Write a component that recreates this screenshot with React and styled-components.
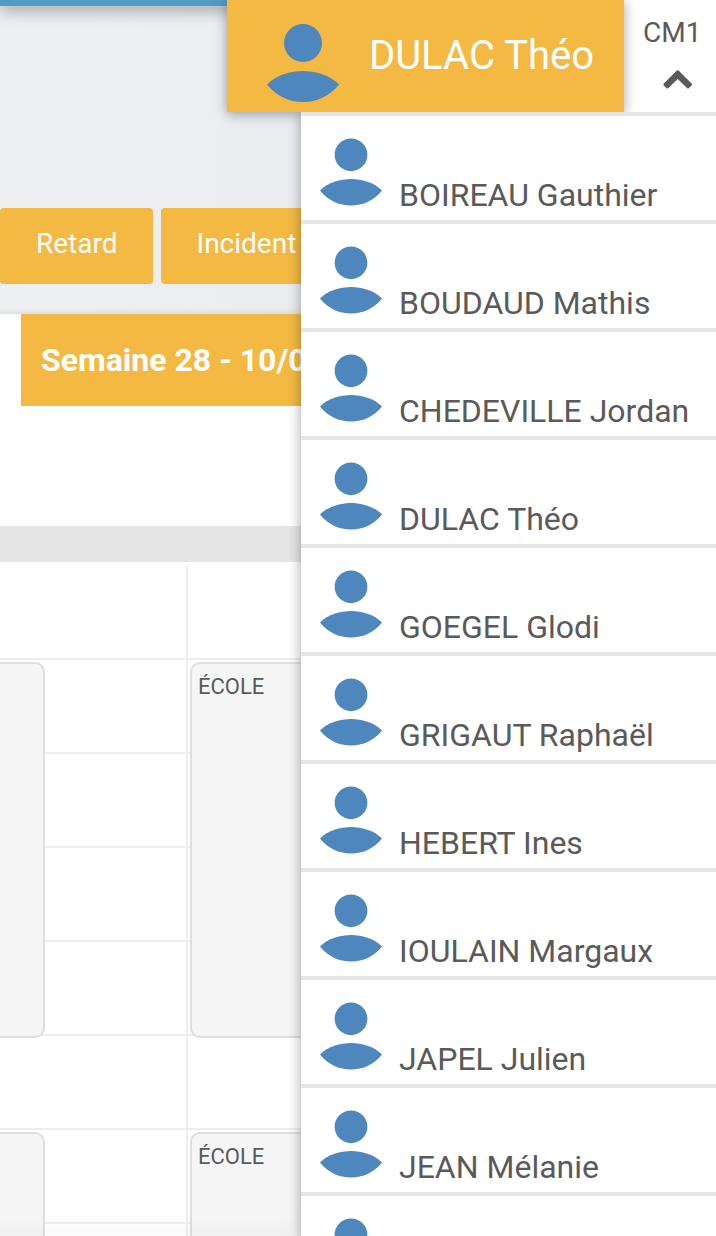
import React, { useState } from 'react';
import styled, { createGlobalStyle, ThemeProvider } from 'styled-components';

const theme = {
  colors: {
    accent: '#f4b942',
    blue: '#4e87bd',
    bar: '#529bc6',
    text: '#5a5a5a',
    divider: '#e5e5e5',
    line: '#ededed',
  },
};

const GlobalStyle = createGlobalStyle`
  * {
    box-sizing: border-box;
  }

  body {
    margin: 0;
    background: white;
    color: ${props => props.theme.colors.text};
    font-family: Roboto, 'Liberation Sans', sans-serif;
  }

  button {
    font-family: inherit;
    border: none;
    cursor: pointer;
  }
`;

const Page = styled.div`
  position: relative;
  height: 100vh;
  overflow: hidden;

  &::after {
    content: '';
    position: absolute;
    inset: auto 0 0 0;
    height: 24px;
    background: linear-gradient(rgba(0, 0, 0, 0), rgba(0, 0, 0, 0.02));
    pointer-events: none;
  }
`;

const TopBar = styled.div`
  height: 6px;
  background: ${props => props.theme.colors.bar};
  box-shadow: 0 2px 16px rgba(0, 0, 0, 0.65);
`;

const Header = styled.header`
  background: linear-gradient(to right, #eeeff1, #ebecf1 60%);
  box-shadow: inset 0 -8px 8px -8px rgba(0, 0, 0, 0.12);
`;

const Actions = styled.div`
  display: flex;
  gap: 8px;
  padding: 202px 0 30px;
`;

const ActionButton = styled.button`
  height: 76px;
  padding: 0 35px 4px 36px;
  border-radius: 4px;
  background: ${props => props.theme.colors.accent};
  color: white;
  font-size: 28px;
  line-height: 32px;
`;

const WeekBanner = styled.h2`
  margin: 0 0 120px 21px;
  padding: 26px 20px;
  background: ${props => props.theme.colors.accent};
  color: white;
  font-size: 32px;
  font-weight: 700;
  line-height: 40px;
  white-space: nowrap;
`;

const DayBand = styled.div`
  height: 36px;
  margin-bottom: 4px;
  background: ${props => props.theme.colors.divider};
`;

const Timetable = styled.div`
  display: grid;
  grid-template-columns: 188px 1fr;
  grid-auto-rows: 94px;
`;

const Slot = styled.div`
  grid-column: ${props => props.$day};
  grid-row: ${props => props.$hour};
  border-bottom: 2px solid ${props => props.theme.colors.line};
  border-right: 2px solid ${props => props.theme.colors.line};
`;

const Event = styled.div`
  grid-column: ${props => props.$day};
  grid-row: ${props => props.$start} / span 4;
  margin: ${props => (props.$day === 1 ? '2px 143px -2px -12px' : '2px 2px -2px')};
  padding: 10px 6px;
  border: 2px solid #dedede;
  border-radius: 10px;
  background: #f5f5f5;
  font-size: 22px;
  line-height: 26px;
`;

const Picker = styled.div`
  position: absolute;
  inset: 0 0 0 auto;
  display: flex;
  flex-direction: column;
  align-items: flex-end;
`;

const PickerHead = styled.div`
  position: relative;
  display: flex;
`;

const Current = styled.div`
  position: relative;
  z-index: 1;
  display: flex;
  align-items: center;
  gap: 30px;
  height: 112px;
  padding: 14px 30px 0 40px;
  background: ${props => props.theme.colors.accent};
  box-shadow: 0 2px 12px rgba(0, 0, 0, 0.36);
`;

const CurrentName = styled.span`
  padding-bottom: 14px;
  color: white;
  font-size: 40px;
  line-height: 48px;
  white-space: nowrap;
`;

const Toggle = styled.button`
  display: flex;
  flex-direction: column;
  align-items: flex-start;
  gap: 21px;
  width: 92px;
  height: 112px;
  padding: 17px 0 0 19px;
  background: white;
  color: ${props => props.theme.colors.text};
  font-size: 28px;
  line-height: 32px;
`;

const Menu = styled.ul`
  position: relative;
  z-index: 1;
  flex: 1;
  width: 415px;
  min-height: 0;
  margin: 0;
  padding: 0;
  overflow: hidden;
  list-style: none;
  background: white;
  box-shadow: 0 2px 12px rgba(0, 0, 0, 0.36);
  clip-path: inset(0 0 0 -20px);
`;

const MenuItem = styled.li`
  border-top: 4px solid ${props => props.theme.colors.divider};
`;

const StudentButton = styled.button`
  display: flex;
  align-items: flex-end;
  gap: 17px;
  width: 100%;
  height: 104px;
  padding: 0 19px 14px;
  background: none;
  color: inherit;
  font-size: 32px;
  line-height: 22px;
  white-space: nowrap;
`;

const AvatarSvg = styled.svg`
  display: block;
  flex: none;
  fill: ${props => props.theme.colors.blue};
`;

const Avatar = ({ width, height }) => (
  <AvatarSvg width={width} height={height} viewBox="0 0 72 78" aria-hidden="true">
    <circle cx="36" cy="19" r="19" />
    <path d="M0 60.5C9 51 24 47 36 47S63 51 72 60.5C63 72 50 78 36 78S9 72 0 60.5Z" />
  </AvatarSvg>
);

const ChevronSvg = styled.svg`
  display: block;
  margin-left: 20px;
`;

const ChevronUp = () => (
  <ChevronSvg width="30" height="20" viewBox="0 0 30 20" aria-hidden="true">
    <path
      d="M13.6.7Q14.7-.3 15.8.7L28.6 13.4Q29.5 14.4 28.6 15.4L26 18Q25 19 24 18L14.7 9L5.4 18Q4.4 19 3.4 18L.8 15.4Q0 14.4.8 13.4Z"
      fill="currentColor"
    />
  </ChevronSvg>
);

const students = [
  'BOIREAU Gauthier',
  'BOUDAUD Mathis',
  'CHEDEVILLE Jordan',
  'DULAC Théo',
  'GOEGEL Glodi',
  'GRIGAUT Raphaël',
  'HEBERT Ines',
  'IOULAIN Margaux',
  'JAPEL Julien',
  'JEAN Mélanie',
  '',
];

const hours = [1, 2, 3, 4, 5, 6, 7, 8, 9, 10];

const App = () => {
  const [open, setOpen] = useState(true);
  const [current, setCurrent] = useState('DULAC Théo');

  return (
    <ThemeProvider theme={theme}>
      <GlobalStyle />
      <Page>
        <Header>
          <TopBar />
          <Actions>
            <ActionButton type="button">Retard</ActionButton>
            <ActionButton type="button">Incident</ActionButton>
          </Actions>
        </Header>

        <main>
          <WeekBanner>Semaine 28 - 10/0</WeekBanner>
          <DayBand />
          <Timetable>
            {hours.map(hour => (
              <React.Fragment key={hour}>
                <Slot $day={1} $hour={hour} />
                <Slot $day={2} $hour={hour} />
              </React.Fragment>
            ))}
            <Event $day={1} $start={2} />
            <Event $day={2} $start={2}>ÉCOLE</Event>
            <Event $day={1} $start={7} />
            <Event $day={2} $start={7}>ÉCOLE</Event>
          </Timetable>
        </main>

        <Picker>
          <PickerHead>
            <Current>
              <Avatar width={72} height={78} />
              <CurrentName>{current}</CurrentName>
            </Current>
            <Toggle type="button" aria-expanded={open} onClick={() => setOpen(!open)}>
              CM1
              <ChevronUp />
            </Toggle>
          </PickerHead>
          {open && (
            <Menu>
              {students.map((name, index) => (
                <MenuItem key={index}>
                  <StudentButton type="button" onClick={() => setCurrent(name)}>
                    <Avatar width={62} height={68} />
                    {name}
                  </StudentButton>
                </MenuItem>
              ))}
            </Menu>
          )}
        </Picker>
      </Page>
    </ThemeProvider>
  );
};

export default App;
